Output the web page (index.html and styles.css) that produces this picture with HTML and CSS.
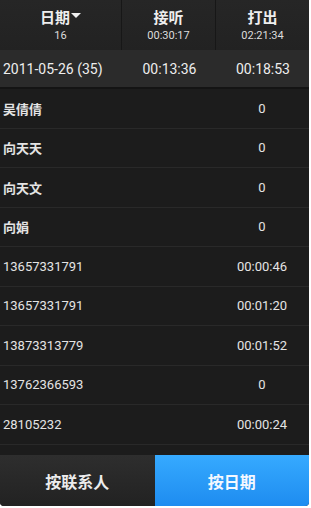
FILE: index.html
```html
<!DOCTYPE html>
<html>
<head>
<meta charset="utf-8">
<link rel="stylesheet" href="styles.css">
</head>
<body>
<div class="app">
  <div class="header">
    <div class="hcol c1">
      <div class="htitle">日期<span class="caret"></span></div>
      <div class="hsub">16</div>
    </div>
    <div class="hcol c2">
      <div class="htitle">接听</div>
      <div class="hsub">00:30:17</div>
    </div>
    <div class="hcol c3">
      <div class="htitle">打出</div>
      <div class="hsub">02:21:34</div>
    </div>
  </div>
  <div class="summary">
    <div class="c1 left">2011-05-26 (35)</div>
    <div class="c2">00:13:36</div>
    <div class="c3">00:18:53</div>
  </div>
  <div class="list">
    <div class="row"><div class="name cn">吴倩倩</div><div class="val">0</div></div>
    <div class="row"><div class="name cn">向天天</div><div class="val">0</div></div>
    <div class="row"><div class="name cn">向天文</div><div class="val">0</div></div>
    <div class="row"><div class="name cn">向娟</div><div class="val">0</div></div>
    <div class="row"><div class="name">13657331791</div><div class="val">00:00:46</div></div>
    <div class="row"><div class="name">13657331791</div><div class="val">00:01:20</div></div>
    <div class="row"><div class="name">13873313779</div><div class="val">00:01:52</div></div>
    <div class="row"><div class="name">13762366593</div><div class="val">0</div></div>
    <div class="row"><div class="name">28105232</div><div class="val">00:00:24</div></div>
  </div>
  <div class="tabs">
    <div class="tab">按联系人</div>
    <div class="tab active">按日期</div>
  </div>
</div>
</body>
</html>
```

FILE: styles.css
```css
html, body {
  margin: 0;
  padding: 0;
  background: #ffffff;
}
.app {
  width: 309px;
  height: 506px;
  background: #1c1c1c;
  display: flex;
  flex-direction: column;
  font-family: Roboto, "Noto Sans CJK SC", sans-serif;
  color: #e6e6e6;
  border-radius: 0 0 4px 4px;
  overflow: hidden;
}
.header {
  height: 50px;
  display: flex;
  background: linear-gradient(#262626, #222222);
}
.c1 { width: 122px; }
.c2 { width: 94px; }
.c3 { flex: 1; }
.hcol {
  display: flex;
  flex-direction: column;
  align-items: center;
  padding-top: 6px;
  box-sizing: border-box;
}
.hcol.c1, .hcol.c2 {
  border-right: 1px solid #171717;
}
.htitle {
  font-family: "Noto Sans CJK SC", sans-serif;
  font-weight: bold;
  font-size: 15px;
  line-height: 21px;
  color: #eeeeee;
  display: flex;
  align-items: center;
}
.caret {
  width: 0;
  height: 0;
  border-left: 5px solid transparent;
  border-right: 5px solid transparent;
  border-top: 5px solid #f0f0f0;
  margin-left: 1px;
  margin-top: -3px;
}
.hsub {
  font-size: 11px;
  line-height: 14px;
  margin-top: 2px;
  color: #dcdcdc;
}
.summary {
  height: 37px;
  display: flex;
  align-items: center;
  background: #2b2b2b;
  font-size: 14px;
  color: #eeeeee;
  border-bottom: 2px solid #141414;
}
.summary > div {
  text-align: center;
}
.summary .left {
  text-align: left;
  padding-left: 3px;
  box-sizing: border-box;
}
.summary .c1 { width: 122px; }
.summary .c2 { width: 95px; }
.list {
  flex: 1;
  display: flex;
  flex-direction: column;
}
.row {
  height: 38.5px;
  border-bottom: 1px solid #292929;
  display: flex;
  align-items: center;
  font-size: 13px;
  color: #e4e4e4;
}
.name {
  flex: 1;
  padding-left: 3px;
}
.name.cn {
  font-family: "Noto Sans CJK SC", sans-serif;
  font-weight: bold;
}
.val {
  width: 94px;
  text-align: center;
}
.tabs {
  height: 51px;
  display: flex;
}
.tab {
  flex: 1;
  display: flex;
  align-items: center;
  justify-content: center;
  font-family: "Noto Sans CJK SC", sans-serif;
  font-weight: bold;
  font-size: 16px;
  color: #ececec;
  background: linear-gradient(#2e2e2e, #222222);
}
.tab.active {
  background: linear-gradient(#36aaff, #1e8cf0);
  color: #f4f8ff;
}
```
